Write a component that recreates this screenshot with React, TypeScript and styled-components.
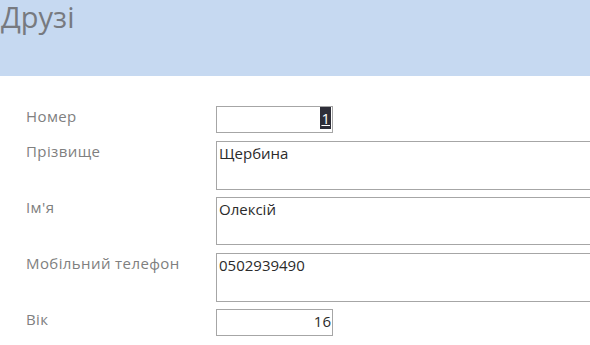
import React from "react";
import styled, { createGlobalStyle } from "styled-components";

const Global = createGlobalStyle`
  html, body { margin: 0; padding: 0; background: #ffffff; }
  body { font-family: "Open Sans", "Noto Sans", sans-serif; overflow: hidden; }
`;

const Page = styled.div`
  width: 590px;
  height: 345px;
  overflow: hidden;
  background: #ffffff;
`;

const Header = styled.header`
  height: 76px;
  background: #c6d9f1;
  padding: 0 0 0 1px;
  box-sizing: border-box;
`;

const Title = styled.h1`
  margin: 0;
  font-family: "Open Sans", "Noto Sans", sans-serif;
  font-weight: 400;
  font-size: 29px;
  line-height: 34px;
  color: #777a80;
`;

const Form = styled.div`
  display: grid;
  grid-template-columns: 190px 390px;
  grid-template-rows: 27px 49px 48px 49px 27px;
  row-gap: 7.5px;
  padding: 30px 0 0 26px;
`;

const Label = styled.div`
  font-size: 15px;
  line-height: 20px;
  letter-spacing: 0.4px;
  color: #808080;
`;

const Field = styled.div<{ $short?: boolean }>`
  box-sizing: border-box;
  height: 100%;
  width: ${(p) => (p.$short ? "117px" : "400px")};
  border: 1px solid #a6a6a6;
  display: flex;
  align-items: flex-start;
  justify-content: ${(p) => (p.$short ? "flex-end" : "flex-start")};
  padding: ${(p) => (p.$short ? "0 1px 0 2px" : "0 2px")};
  font-size: 15px;
  line-height: 22px;
  color: #2b2b2b;
`;

const Selected = styled.span`
  display: block;
  background: #2e2e38;
  color: #ffffff;
  padding: 0 1px;
  text-decoration: underline;
`;

const rows = [
  { label: "Номер", value: <Selected>1</Selected>, short: true },
  { label: "Прізвище", value: "Щербина" },
  { label: "Ім'я", value: "Олексій" },
  { label: "Мобільний телефон", value: "0502939490" },
  { label: "Вік", value: "16", short: true },
];

export default function App() {
  return (
    <Page>
      <Global />
      <Header>
        <Title>Друзі</Title>
      </Header>
      <Form>
        {rows.map((r) => (
          <React.Fragment key={r.label}>
            <Label>{r.label}</Label>
            <Field $short={r.short}>{r.value}</Field>
          </React.Fragment>
        ))}
      </Form>
    </Page>
  );
}
